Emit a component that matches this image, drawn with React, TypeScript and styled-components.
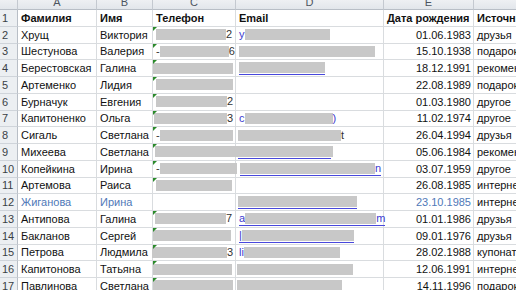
import React from "react";
import styled, { createGlobalStyle, css } from "styled-components";

const Global = createGlobalStyle`
  html, body { margin: 0; padding: 0; background: #fff; }
  body { width: 516px; height: 290px; overflow: hidden; font-family: "Liberation Sans", Arial, sans-serif; }
`;

const COLS = "18px 79px 56px 83px 148px 90px 110px";
const ROW_H = 16.75;

const Sheet = styled.div`
  display: flex;
  flex-direction: column;
  width: 516px;
  height: 290px;
  overflow: hidden;
  font-size: 11px;
  color: #111;
`;

const HeadRow = styled.div`
  display: grid;
  grid-template-columns: ${COLS};
  height: 10px;
  flex: none;
`;

const ColHead = styled.div`
  box-sizing: border-box;
  height: 10px;
  background: linear-gradient(#eef0f3, #e2e6eb);
  border-right: 1px solid #c4c9d0;
  border-bottom: 1px solid #b8bec6;
  display: flex;
  align-items: flex-end;
  justify-content: center;
  overflow: hidden;
  color: #4c5460;
  font-size: 11px;
  line-height: 11px;
  padding-bottom: 1px;
`;

const Row = styled.div`
  display: grid;
  grid-template-columns: ${COLS};
  height: ${ROW_H}px;
  flex: none;
`;

const RowHead = styled.div`
  box-sizing: border-box;
  background: #eceff2;
  border-right: 1px solid #b8bec6;
  border-bottom: 1px solid #cfd4da;
  display: flex;
  align-items: center;
  padding-left: 2px;
  color: #3a3f46;
  font-size: 11px;
`;

const Cell = styled.div<{ $right?: boolean; $bold?: boolean; $blue?: boolean; $flag?: boolean }>`
  box-sizing: border-box;
  position: relative;
  border-right: 1px solid #d9dcdf;
  border-bottom: 1px solid #d9dcdf;
  display: flex;
  align-items: center;
  justify-content: ${(p) => (p.$right ? "flex-end" : "flex-start")};
  padding: ${(p) => (p.$right ? "0 2px 0 0" : "0 0 0 3px")};
  white-space: nowrap;
  font-weight: ${(p) => (p.$bold ? 700 : 400)};
  color: ${(p) => (p.$blue ? "#4f79b8" : "#111")};
  ${(p) =>
    p.$flag &&
    css`
      &::before {
        content: "";
        position: absolute;
        left: 0;
        top: 0;
        border-top: 4px solid #2b8a2b;
        border-right: 4px solid transparent;
        z-index: 2;
      }
    `}
`;

const DataCell = styled(Cell)`
  padding: 0;
`;

const Content = styled.span<{ $ml: number; $ul?: boolean }>`
  display: inline-flex;
  align-items: center;
  margin-left: ${(p) => p.$ml}px;
  height: 13px;
  ${(p) =>
    p.$ul &&
    css`
      border-bottom: 1px solid #4848dc;
    `}
`;

const Redact = styled.span<{ $w: number }>`
  display: inline-block;
  width: ${(p) => p.$w}px;
  height: 11px;
  background: #c8c8c8;
  flex: none;
`;

const Frag = styled.span<{ $link?: boolean }>`
  font-size: 11px;
  line-height: 11px;
  color: ${(p) => (p.$link ? "#3b3bd0" : "#333")};
`;

type Red = { ml: number; w: number; pre?: string; post?: string; link?: boolean; ul?: boolean } | null;

type R = {
  last: string;
  first: string;
  c: Red;
  d: Red;
  date: string;
  src: string;
  blue?: boolean;
};

const rows: R[] = [
  { last: "Хрущ", first: "Виктория", c: { ml: 3, w: 70, post: "2" }, d: { ml: 3, w: 85, pre: "y", link: true }, date: "01.06.1983", src: "друзья" },
  { last: "Шестунова", first: "Валерия", c: { ml: 3, w: 69, pre: "-", post: "6" }, d: { ml: 3, w: 136 }, date: "15.10.1938", src: "подарок" },
  { last: "Берестовская", first: "Галина", c: { ml: 0, w: 80 }, d: { ml: 3, w: 86, link: true, ul: true }, date: "18.12.1991", src: "рекомендация" },
  { last: "Артеменко", first: "Лидия", c: { ml: 3, w: 77 }, d: null, date: "22.08.1989", src: "подарок" },
  { last: "Бурначук", first: "Евгения", c: { ml: 3, w: 71, post: "2" }, d: null, date: "01.03.1980", src: "другое" },
  { last: "Капитоненко", first: "Ольга", c: { ml: 1, w: 73, post: "3" }, d: { ml: 3, w: 88, pre: "c", post: ")", link: true }, date: "11.02.1974", src: "другое" },
  { last: "Сигаль", first: "Светлана", c: { ml: 3, w: 73, pre: "-" }, d: { ml: 2, w: 103, post: "t" }, date: "26.04.1994", src: "друзья" },
  { last: "Михеева", first: "Светлана", c: { ml: 2, w: 178 }, d: { ml: 2, w: 0, link: true, ul: true }, date: "05.06.1984", src: "рекомендация" },
  { last: "Копейкина", first: "Ирина", c: { ml: 3, w: 77, pre: "-" }, d: { ml: 4, w: 135, post: "n", link: true, ul: true }, date: "03.07.1959", src: "другое" },
  { last: "Артемова", first: "Раиса", c: { ml: 3, w: 76 }, d: null, date: "26.08.1985", src: "интернет" },
  { last: "Жиганова", first: "Ирина", c: null, d: { ml: 2, w: 119, link: true, ul: true }, date: "23.10.1985", src: "интернет", blue: true },
  { last: "Антипова", first: "Галина", c: { ml: 2, w: 71, post: "7" }, d: { ml: 3, w: 131, pre: "a", post: "m", link: true, ul: true }, date: "01.01.1986", src: "друзья" },
  { last: "Бакланов", first: "Сергей", c: { ml: 0, w: 78 }, d: { ml: 3, w: 112, pre: "|", link: true, ul: true }, date: "09.01.1976", src: "друзья" },
  { last: "Петрова", first: "Людмила", c: { ml: -1, w: 75, post: "3" }, d: { ml: 3, w: 96, pre: "li", link: true }, date: "28.02.1988", src: "купонатор" },
  { last: "Капитонова", first: "Татьяна", c: { ml: 0, w: 79 }, d: { ml: 1, w: 116 }, date: "12.06.1991", src: "интернет" },
  { last: "Павлинова", first: "Светлана", c: { ml: 0, w: 80 }, d: { ml: 1, w: 105 }, date: "14.11.1996", src: "подарок" },
];

function Masked({ r }: { r: Red }) {
  if (!r) return null;
  return (
    <Content $ml={r.ml} $ul={r.ul}>
      {r.pre && <Frag $link={r.link}>{r.pre}</Frag>}
      {r.w > 0 && <Redact $w={r.w} />}
      {r.w === 0 && <Redact $w={93} style={{ background: "transparent" }} />}
      {r.post && <Frag $link={r.link}>{r.post}</Frag>}
    </Content>
  );
}

export default function App() {
  return (
    <>
      <Global />
      <Sheet>
        <HeadRow>
          <ColHead />
          {["A", "B", "C", "D", "E", "F"].map((l) => (
            <ColHead key={l}>{l}</ColHead>
          ))}
        </HeadRow>
        <Row>
          <RowHead>1</RowHead>
          <Cell $bold>Фамилия</Cell>
          <Cell $bold>Имя</Cell>
          <Cell $bold>Телефон</Cell>
          <Cell $bold>Email</Cell>
          <Cell $bold>Дата рождения</Cell>
          <Cell $bold>Источник</Cell>
        </Row>
        {rows.map((r, i) => (
          <Row key={i}>
            <RowHead>{i + 2}</RowHead>
            <Cell $blue={r.blue}>{r.last}</Cell>
            <Cell $blue={r.blue}>{r.first}</Cell>
            <DataCell $flag={!!r.c}>
              <Masked r={r.c} />
            </DataCell>
            <DataCell>
              <Masked r={r.d} />
            </DataCell>
            <Cell $right $blue={r.blue}>{r.date}</Cell>
            <Cell>{r.src}</Cell>
          </Row>
        ))}
      </Sheet>
    </>
  );
}
